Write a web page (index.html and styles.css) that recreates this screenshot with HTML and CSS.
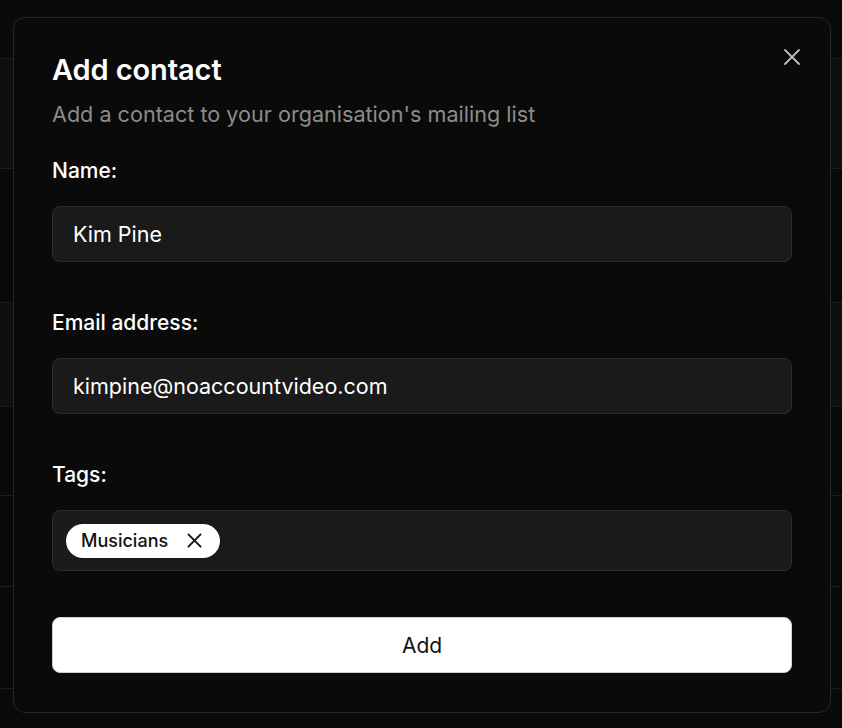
FILE: index.html
```html
<!DOCTYPE html>
<html lang="en">
<head>
<meta charset="utf-8">
<title>Add contact</title>
<link rel="stylesheet" href="styles.css">
</head>
<body>
<div class="backdrop">
  <div class="bg-row r1 alt"></div>
  <div class="bg-row r2"></div>
  <div class="bg-row r3 alt"></div>
  <div class="bg-row r4"></div>
  <div class="bg-row r5"></div>
  <div class="bg-row r6"></div>
</div>
<div class="modal" role="dialog" aria-labelledby="title">
  <button class="close" aria-label="Close">
    <svg width="16" height="16" viewBox="0 0 16 16" fill="none"><path d="M1 1L15 15M15 1L1 15" stroke="currentColor" stroke-width="1.8" stroke-linecap="round"/></svg>
  </button>
  <h1 id="title" class="title">Add contact</h1>
  <p class="subtitle">Add a contact to your organisation's mailing list</p>
  <div class="field">
    <label class="label">Name:</label>
    <div class="input">Kim Pine</div>
  </div>
  <div class="field">
    <label class="label">Email address:</label>
    <div class="input">kimpine@noaccountvideo.com</div>
  </div>
  <div class="field">
    <label class="label">Tags:</label>
    <div class="input tags">
      <span class="chip">Musicians
        <svg width="16" height="16" viewBox="0 0 16 16" fill="none"><path d="M1.5 1.5L14.5 14.5M14.5 1.5L1.5 14.5" stroke="currentColor" stroke-width="2" stroke-linecap="round"/></svg>
      </span>
    </div>
  </div>
  <button class="submit">Add</button>
</div>
</body>
</html>
```
FILE: styles.css
```css
* { box-sizing: border-box; }
html, body {
  margin: 0;
  height: 100%;
  background: #0a0a0a;
  font-family: Inter, "Noto Sans", sans-serif;
  overflow: hidden;
}
.backdrop {
  padding-top: 58px;
  display: flex;
  flex-direction: column;
}
.bg-row {
  border-top: 1px solid #1c1c1c;
  background: #090909;
}
.bg-row.alt { background: #0f0f0f; }
.r1 { height: 110px; }
.r2 { height: 134px; }
.r3 { height: 104px; }
.r4 { height: 89px; }
.r5 { height: 91px; }
.r6 { height: 103px; border-bottom: 1px solid #1c1c1c; }

.modal {
  position: fixed;
  left: 13px;
  top: 17px;
  width: 818px;
  height: 696px;
  background: #0a0a0a;
  border: 1px solid #262626;
  border-radius: 12px;
  padding: 35px 38px 0 38px;
  display: flex;
  flex-direction: column;
  color: #fff;
}
.close {
  position: absolute;
  top: 31px;
  right: 30px;
  width: 16px;
  height: 16px;
  padding: 0;
  border: 0;
  background: none;
  color: #bdbdbd;
  display: flex;
}
.title {
  margin: 0;
  font-size: 29px;
  line-height: 34px;
  font-weight: 600;
  letter-spacing: -0.1px;
}
.subtitle {
  margin: 13px 0 0;
  font-size: 21.6px;
  line-height: 28px;
  color: #8c8c8c;
}
.field {
  display: flex;
  flex-direction: column;
  margin-top: 29px;
}
.field + .field { margin-top: 47px; }
.label {
  font-size: 21px;
  line-height: 28px;
  font-weight: 500;
}
.input {
  margin-top: 21px;
  height: 56px;
  background: #1a1a1a;
  border: 1px solid #2d2d2d;
  border-radius: 8px;
  padding: 0 20px;
  display: flex;
  align-items: center;
  font-size: 21.5px;
  color: #fff;
}
.tags {
  height: 61px;
  padding: 0 13px;
}
.chip {
  display: inline-flex;
  align-items: center;
  gap: 19px;
  height: 34px;
  padding: 0 18px 0 15px;
  background: #fff;
  color: #111;
  border-radius: 17px;
  font-size: 18px;
  font-weight: 500;
}
.chip svg { width: 15px; height: 15px; }
.submit {
  margin-top: 46px;
  height: 56px;
  width: 100%;
  background: #fff;
  color: #111;
  border: 1px solid #d0d0d0;
  border-radius: 8px;
  font-family: Inter, "Noto Sans", sans-serif;
  font-size: 21px;
}
```
